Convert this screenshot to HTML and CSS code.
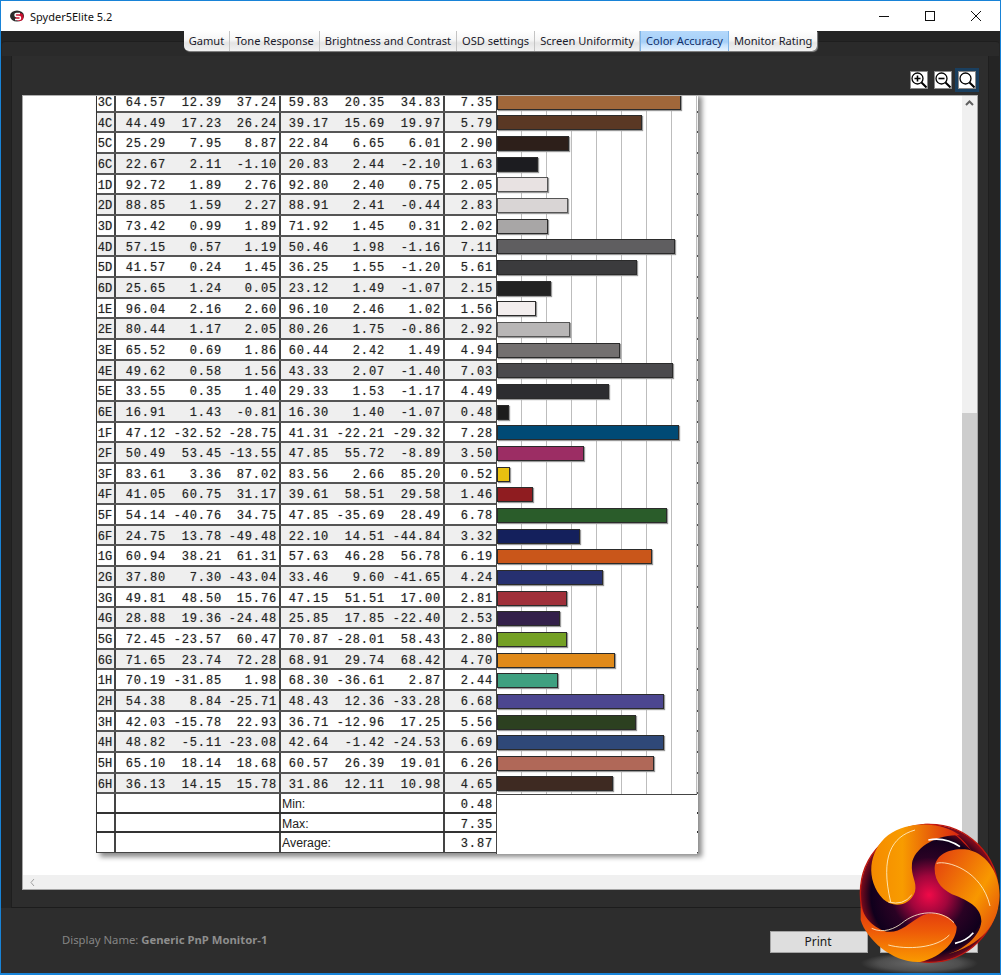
FILE: index.html
```html
<!DOCTYPE html>
<html lang="en">
<head>
<meta charset="utf-8">
<title>Spyder5Elite 5.2</title>
<link rel="stylesheet" href="styles.css">
</head>
<body>
<div class="window">
  <header class="titlebar">
    <svg class="appicon" width="16" height="16" viewBox="0 0 16 16"><ellipse cx="7" cy="8" rx="7" ry="5.500" fill="#2a2a2a"/><circle cx="9.500" cy="9" r="4" fill="#c8102e"/><path d="M10 5.500H6.500a1.500 1.500 0 0 0 0 3h2.500a1.500 1.500 0 0 1 0 3H5" fill="none" stroke="#fff" stroke-width="1.500"/></svg>
    <span class="apptitle">Spyder5Elite 5.2</span>
    <div class="winctl">
      <svg width="46" height="30" viewBox="0 0 46 30"><path d="M18 15.500h10" stroke="#111" fill="none"/></svg>
      <svg width="46" height="30" viewBox="0 0 46 30"><rect x="18.500" y="10.500" width="9" height="9" stroke="#111" fill="none"/></svg>
      <svg width="46" height="30" viewBox="0 0 46 30"><path d="M18 10l10 10M28 10l-10 10" stroke="#111" fill="none"/></svg>
    </div>
  </header>
  <nav class="tabstrip">
    <div class="tabs">
      <span class="tab">Gamut</span><span class="tab">Tone Response</span><span class="tab">Brightness and Contrast</span><span class="tab">OSD settings</span><span class="tab">Screen Uniformity</span><span class="tab active">Color Accuracy</span><span class="tab">Monitor Rating</span>
    </div>
  </nav>
  <main class="panel">
    <div class="tools">
      <span class="zoombtn"><svg width="16" height="16" viewBox="0 0 16 16"><circle cx="6.500" cy="6.500" r="5.500" fill="none" stroke="#000" stroke-width="1.300"/><path d="M10.500 10.500l5 5" stroke="#000" stroke-width="2"/><path d="M3.500 6.500h6M6.500 3.500v6" stroke="#000" stroke-width="1.600"/></svg></span>
      <span class="zoombtn"><svg width="16" height="16" viewBox="0 0 16 16"><circle cx="6.500" cy="6.500" r="5.500" fill="none" stroke="#000" stroke-width="1.300"/><path d="M10.500 10.500l5 5" stroke="#000" stroke-width="2"/><path d="M3.500 6.500h6" stroke="#000" stroke-width="1.600"/></svg></span>
      <span class="zoombtn selected"><svg width="16" height="16" viewBox="0 0 16 16"><circle cx="6.500" cy="6.500" r="5.500" fill="none" stroke="#000" stroke-width="1.300"/><path d="M10.500 10.500l5 5" stroke="#000" stroke-width="2"/></svg></span>
    </div>
    <section class="viewport">
      <div class="content">
        <div class="report">
          <div class="row"><span class="id">3C</span><span class="v a">64.57</span><span class="v">12.39</span><span class="v c">37.24</span><span class="v b">59.83</span><span class="v">20.35</span><span class="v">34.83</span><span class="v de">7.35</span><span class="chart"><i class="bar" style="width:184px;background:#a0673a"></i></span></div>
          <div class="row alt"><span class="id">4C</span><span class="v a">44.49</span><span class="v">17.23</span><span class="v c">26.24</span><span class="v b">39.17</span><span class="v">15.69</span><span class="v">19.97</span><span class="v de">5.79</span><span class="chart"><i class="bar" style="width:145px;background:#5a3824"></i></span></div>
          <div class="row"><span class="id">5C</span><span class="v a">25.29</span><span class="v">7.95</span><span class="v c">8.87</span><span class="v b">22.84</span><span class="v">6.65</span><span class="v">6.01</span><span class="v de">2.90</span><span class="chart"><i class="bar" style="width:72px;background:#2d1f1a"></i></span></div>
          <div class="row alt"><span class="id">6C</span><span class="v a">22.67</span><span class="v">2.11</span><span class="v c">-1.10</span><span class="v b">20.83</span><span class="v">2.44</span><span class="v">-2.10</span><span class="v de">1.63</span><span class="chart"><i class="bar" style="width:41px;background:#1c1c20"></i></span></div>
          <div class="row"><span class="id">1D</span><span class="v a">92.72</span><span class="v">1.89</span><span class="v c">2.76</span><span class="v b">92.80</span><span class="v">2.40</span><span class="v">0.75</span><span class="v de">2.05</span><span class="chart"><i class="bar light" style="width:51px;background:#e8e2e2"></i></span></div>
          <div class="row alt"><span class="id">2D</span><span class="v a">88.85</span><span class="v">1.59</span><span class="v c">2.27</span><span class="v b">88.91</span><span class="v">2.41</span><span class="v">-0.44</span><span class="v de">2.83</span><span class="chart"><i class="bar light" style="width:71px;background:#d9d5d5"></i></span></div>
          <div class="row"><span class="id">3D</span><span class="v a">73.42</span><span class="v">0.99</span><span class="v c">1.89</span><span class="v b">71.92</span><span class="v">1.45</span><span class="v">0.31</span><span class="v de">2.02</span><span class="chart"><i class="bar" style="width:51px;background:#a8a6a6"></i></span></div>
          <div class="row alt"><span class="id">4D</span><span class="v a">57.15</span><span class="v">0.57</span><span class="v c">1.19</span><span class="v b">50.46</span><span class="v">1.98</span><span class="v">-1.16</span><span class="v de">7.11</span><span class="chart"><i class="bar" style="width:178px;background:#5f5e60"></i></span></div>
          <div class="row"><span class="id">5D</span><span class="v a">41.57</span><span class="v">0.24</span><span class="v c">1.45</span><span class="v b">36.25</span><span class="v">1.55</span><span class="v">-1.20</span><span class="v de">5.61</span><span class="chart"><i class="bar" style="width:140px;background:#3b3b3d"></i></span></div>
          <div class="row alt"><span class="id">6D</span><span class="v a">25.65</span><span class="v">1.24</span><span class="v c">0.05</span><span class="v b">23.12</span><span class="v">1.49</span><span class="v">-1.07</span><span class="v de">2.15</span><span class="chart"><i class="bar" style="width:54px;background:#222"></i></span></div>
          <div class="row"><span class="id">1E</span><span class="v a">96.04</span><span class="v">2.16</span><span class="v c">2.60</span><span class="v b">96.10</span><span class="v">2.46</span><span class="v">1.02</span><span class="v de">1.56</span><span class="chart"><i class="bar" style="width:39px;background:#f3eeee"></i></span></div>
          <div class="row alt"><span class="id">2E</span><span class="v a">80.44</span><span class="v">1.17</span><span class="v c">2.05</span><span class="v b">80.26</span><span class="v">1.75</span><span class="v">-0.86</span><span class="v de">2.92</span><span class="chart"><i class="bar light" style="width:73px;background:#b8b6b6"></i></span></div>
          <div class="row"><span class="id">3E</span><span class="v a">65.52</span><span class="v">0.69</span><span class="v c">1.86</span><span class="v b">60.44</span><span class="v">2.42</span><span class="v">1.49</span><span class="v de">4.94</span><span class="chart"><i class="bar" style="width:123px;background:#737070"></i></span></div>
          <div class="row alt"><span class="id">4E</span><span class="v a">49.62</span><span class="v">0.58</span><span class="v c">1.56</span><span class="v b">43.33</span><span class="v">2.07</span><span class="v">-1.40</span><span class="v de">7.03</span><span class="chart"><i class="bar" style="width:176px;background:#4b4a4d"></i></span></div>
          <div class="row"><span class="id">5E</span><span class="v a">33.55</span><span class="v">0.35</span><span class="v c">1.40</span><span class="v b">29.33</span><span class="v">1.53</span><span class="v">-1.17</span><span class="v de">4.49</span><span class="chart"><i class="bar" style="width:112px;background:#2d2d30"></i></span></div>
          <div class="row alt"><span class="id">6E</span><span class="v a">16.91</span><span class="v">1.43</span><span class="v c">-0.81</span><span class="v b">16.30</span><span class="v">1.40</span><span class="v">-1.07</span><span class="v de">0.48</span><span class="chart"><i class="bar" style="width:12px;background:#1c1c1c"></i></span></div>
          <div class="row"><span class="id">1F</span><span class="v a">47.12</span><span class="v">-32.52</span><span class="v c">-28.75</span><span class="v b">41.31</span><span class="v">-22.21</span><span class="v">-29.32</span><span class="v de">7.28</span><span class="chart"><i class="bar" style="width:182px;background:#004a75"></i></span></div>
          <div class="row alt"><span class="id">2F</span><span class="v a">50.49</span><span class="v">53.45</span><span class="v c">-13.55</span><span class="v b">47.85</span><span class="v">55.72</span><span class="v">-8.89</span><span class="v de">3.50</span><span class="chart"><i class="bar" style="width:87px;background:#9c2d64"></i></span></div>
          <div class="row"><span class="id">3F</span><span class="v a">83.61</span><span class="v">3.36</span><span class="v c">87.02</span><span class="v b">83.56</span><span class="v">2.66</span><span class="v">85.20</span><span class="v de">0.52</span><span class="chart"><i class="bar" style="width:13px;background:#e8c010"></i></span></div>
          <div class="row alt"><span class="id">4F</span><span class="v a">41.05</span><span class="v">60.75</span><span class="v c">31.17</span><span class="v b">39.61</span><span class="v">58.51</span><span class="v">29.58</span><span class="v de">1.46</span><span class="chart"><i class="bar" style="width:36px;background:#8f1c20"></i></span></div>
          <div class="row"><span class="id">5F</span><span class="v a">54.14</span><span class="v">-40.76</span><span class="v c">34.75</span><span class="v b">47.85</span><span class="v">-35.69</span><span class="v">28.49</span><span class="v de">6.78</span><span class="chart"><i class="bar" style="width:170px;background:#2a5c2a"></i></span></div>
          <div class="row alt"><span class="id">6F</span><span class="v a">24.75</span><span class="v">13.78</span><span class="v c">-49.48</span><span class="v b">22.10</span><span class="v">14.51</span><span class="v">-44.84</span><span class="v de">3.32</span><span class="chart"><i class="bar" style="width:83px;background:#14205c"></i></span></div>
          <div class="row"><span class="id">1G</span><span class="v a">60.94</span><span class="v">38.21</span><span class="v c">61.31</span><span class="v b">57.63</span><span class="v">46.28</span><span class="v">56.78</span><span class="v de">6.19</span><span class="chart"><i class="bar" style="width:155px;background:#c9561a"></i></span></div>
          <div class="row alt"><span class="id">2G</span><span class="v a">37.80</span><span class="v">7.30</span><span class="v c">-43.04</span><span class="v b">33.46</span><span class="v">9.60</span><span class="v">-41.65</span><span class="v de">4.24</span><span class="chart"><i class="bar" style="width:106px;background:#263070"></i></span></div>
          <div class="row"><span class="id">3G</span><span class="v a">49.81</span><span class="v">48.50</span><span class="v c">15.76</span><span class="v b">47.15</span><span class="v">51.51</span><span class="v">17.00</span><span class="v de">2.81</span><span class="chart"><i class="bar" style="width:70px;background:#a0303a"></i></span></div>
          <div class="row alt"><span class="id">4G</span><span class="v a">28.88</span><span class="v">19.36</span><span class="v c">-24.48</span><span class="v b">25.85</span><span class="v">17.85</span><span class="v">-22.40</span><span class="v de">2.53</span><span class="chart"><i class="bar" style="width:63px;background:#33204a"></i></span></div>
          <div class="row"><span class="id">5G</span><span class="v a">72.45</span><span class="v">-23.57</span><span class="v c">60.47</span><span class="v b">70.87</span><span class="v">-28.01</span><span class="v">58.43</span><span class="v de">2.80</span><span class="chart"><i class="bar" style="width:70px;background:#74a024"></i></span></div>
          <div class="row alt"><span class="id">6G</span><span class="v a">71.65</span><span class="v">23.74</span><span class="v c">72.28</span><span class="v b">68.91</span><span class="v">29.74</span><span class="v">68.42</span><span class="v de">4.70</span><span class="chart"><i class="bar" style="width:118px;background:#e08a1a"></i></span></div>
          <div class="row"><span class="id">1H</span><span class="v a">70.19</span><span class="v">-31.85</span><span class="v c">1.98</span><span class="v b">68.30</span><span class="v">-36.61</span><span class="v">2.87</span><span class="v de">2.44</span><span class="chart"><i class="bar" style="width:61px;background:#3fa080"></i></span></div>
          <div class="row alt"><span class="id">2H</span><span class="v a">54.38</span><span class="v">8.84</span><span class="v c">-25.71</span><span class="v b">48.43</span><span class="v">12.36</span><span class="v">-33.28</span><span class="v de">6.68</span><span class="chart"><i class="bar" style="width:167px;background:#4c4690"></i></span></div>
          <div class="row"><span class="id">3H</span><span class="v a">42.03</span><span class="v">-15.78</span><span class="v c">22.93</span><span class="v b">36.71</span><span class="v">-12.96</span><span class="v">17.25</span><span class="v de">5.56</span><span class="chart"><i class="bar" style="width:139px;background:#2c4020"></i></span></div>
          <div class="row alt"><span class="id">4H</span><span class="v a">48.82</span><span class="v">-5.11</span><span class="v c">-23.08</span><span class="v b">42.64</span><span class="v">-1.42</span><span class="v">-24.53</span><span class="v de">6.69</span><span class="chart"><i class="bar" style="width:167px;background:#2f4878"></i></span></div>
          <div class="row"><span class="id">5H</span><span class="v a">65.10</span><span class="v">18.14</span><span class="v c">18.68</span><span class="v b">60.57</span><span class="v">26.39</span><span class="v">19.01</span><span class="v de">6.26</span><span class="chart"><i class="bar" style="width:157px;background:#b06858"></i></span></div>
          <div class="row alt"><span class="id">6H</span><span class="v a">36.13</span><span class="v">14.15</span><span class="v c">15.78</span><span class="v b">31.86</span><span class="v">12.11</span><span class="v">10.98</span><span class="v de">4.65</span><span class="chart"><i class="bar" style="width:116px;background:#3e2a22"></i></span></div>
          <div class="sum"><span class="id"></span><span class="blank"></span><span class="lbl">Min:</span><span class="v de">0.48</span><span class="sumchart"></span></div>
          <div class="sum"><span class="id"></span><span class="blank"></span><span class="lbl">Max:</span><span class="v de">7.35</span><span class="sumchart"></span></div>
          <div class="sum"><span class="id"></span><span class="blank"></span><span class="lbl">Average:</span><span class="v de">3.87</span><span class="sumchart"></span></div>
        </div>
      </div>
      <div class="vscroll"><svg class="arrow" width="15" height="15" viewBox="0 0 15 15"><path d="M4 9l3.500-3.500L11 9" fill="none" stroke="#606060" stroke-width="2"/></svg><div class="thumb"></div></div>
      <div class="hscroll"><svg width="15" height="15" viewBox="0 0 15 15"><path d="M9 4L6 7.500 9 11" fill="none" stroke="#a0a0a0"/></svg></div>
    </section>
  </main>
  <footer class="footer">
    <span class="display">Display Name: <b>Generic PnP Monitor-1</b></span>
    <span class="btn print">Print</span>
    <span class="btn"></span>
  </footer>
  <svg class="logo" width="241" height="195" viewBox="0 0 723 585">
    <defs>
      <radialGradient id="shadow"><stop offset="0" stop-color="#6a6a6a"/><stop offset=".7" stop-color="#4e4e4e"/><stop offset="1" stop-color="#2d2d2d"/></radialGradient>
      <radialGradient id="core" cx="507" cy="345" r="205" gradientUnits="userSpaceOnUse"><stop offset="0" stop-color="#f00a48"/><stop offset=".28" stop-color="#a0063c"/><stop offset=".55" stop-color="#2a0224"/><stop offset=".85" stop-color="#10001c"/><stop offset="1" stop-color="#7a0a1c"/></radialGradient>
      <linearGradient id="b1" x1="0" y1="0" x2="1" y2="0"><stop offset="0" stop-color="#f58a00"/><stop offset=".35" stop-color="#f89c00"/><stop offset=".7" stop-color="#e65a0a"/><stop offset="1" stop-color="#d92410"/></linearGradient>
      <linearGradient id="b2" x1="0" y1="0" x2="1" y2="1"><stop offset="0" stop-color="#e23a10"/><stop offset=".55" stop-color="#f89800"/><stop offset="1" stop-color="#d82c10"/></linearGradient>
      <linearGradient id="b3" x1="0" y1="0" x2="0" y2="1"><stop offset="0" stop-color="#dc2a12"/><stop offset=".5" stop-color="#ee5a08"/><stop offset="1" stop-color="#fa9a00"/></linearGradient>
    </defs>
    <ellipse cx="478" cy="550" rx="176" ry="32" fill="url(#shadow)"/>
    <circle cx="508" cy="340" r="207" fill="url(#core)" stroke="#c0180f" stroke-width="4"/>
    <path d="M635 212C590 150 540 130 490 131C540 135 590 160 612 190Z" fill="#d8200f"/>
    <path d="M600 166C550 128 450 118 385 165C325 212 315 300 370 358C400 385 450 378 465 335C472 305 452 290 456 250C462 205 530 160 600 166Z" fill="url(#b1)"/>
    <path d="M524 262C528 222 570 204 615 208C680 215 725 285 718 360C712 430 670 495 555 525C610 510 660 470 664 425C665 385 630 365 590 348C550 335 522 305 524 262Z" fill="url(#b2)"/>
    <path d="M302 360C302 400 330 440 380 455C420 460 445 430 480 410C520 390 570 400 590 440C590 480 550 530 480 546C400 550 320 480 302 420Z" fill="url(#b3)"/>
    <path d="M385 366Q430 378 455 345M465 150C395 170 360 230 392 366" fill="none" stroke="#fff3d0" stroke-width="2.500"/>
    <path d="M530 250C560 240 665 270 690 378M335 445C370 462 405 445 425 430C470 392 540 385 582 428M385 495C440 510 530 505 568 465" fill="none" stroke="#fff3d0" stroke-width="2.500"/>
    <path d="M505 180Q555 170 600 200" fill="none" stroke="#fff" stroke-width="5"/>
    <path d="M585 490Q620 482 640 458" fill="none" stroke="#fff" stroke-width="5"/>
  </svg>
</div>
</body>
</html>
```
FILE: styles.css
```css
* { box-sizing: border-box; }
html, body { margin: 0; padding: 0; background: #2d2d2d; }
.window {
  position: relative;
  width: 1001px;
  height: 975px;
  overflow: hidden;
  display: flex;
  flex-direction: column;
  background: #242424;
  border: 1px solid #1883d7;
  border-bottom-width: 2px;
  font-family: "Noto Sans", sans-serif;
}
.titlebar {
  height: 30px;
  flex: none;
  background: #fff;
  display: flex;
  align-items: center;
  padding-left: 9px;
  font-size: 11px;
  color: #111;
}
.appicon { margin-right: 4px; }
.winctl { margin-left: auto; display: flex; margin-right: 1px; }
.tabstrip {
  position: relative;
  height: 24px;
  flex: none;
  display: flex;
  justify-content: center;
  align-items: flex-start;
}
.tabstrip::before {
  content: "";
  position: absolute;
  left: 1px;
  right: 1px;
  top: 10px;
  height: 14px;
  background: #2a2a2a;
  border-radius: 3px 3px 0 0;
  border-top: 1px solid #1e1e1e;
}
.tabs {
  position: relative;
  display: flex;
  height: 20px;
  border-radius: 0 0 5px 5px;
  overflow: hidden;
  box-shadow: 1px 1px 1px #888;
}
.tab {
  display: block;
  font-size: 11.1px;
  line-height: 20px;
  padding: 0 5px;
  color: #1a1a2a;
  background: linear-gradient(#fff, #f6f6f6 45%, #e4e4e4 60%, #f2f2f2);
  border-right: 1px solid #c4c4c4;
  white-space: nowrap;
}
.tab:last-child { border-right: 0; }
.tab.active {
  color: #12306a;
  background: linear-gradient(#b4d8fb, #a6d0f8 55%, #c5e1fc 70%, #e6f3ff);
  border-left: 1px solid #7fb5e8;
  border-right: 1px solid #7fb5e8;
}
.panel {
  flex: none;
  height: 853px;
  margin: 0 11px 0 10px;
  background: #2d2d2d;
  border: 1px solid #1e1e1e;
  border-bottom: 1px solid #1c1c1c;
  padding: 0 10px 17px 10px;
  display: flex;
  flex-direction: column;
}
.tools {
  height: 39px;
  flex: none;
  display: flex;
  justify-content: flex-end;
  align-items: flex-start;
  padding-top: 15px;
  padding-right: 2px;
  gap: 6px;
}
.zoombtn {
  width: 18px;
  height: 18px;
  background: #fff;
  border: 1px solid #8a8a8a;
  display: flex;
  align-items: center;
  justify-content: center;
}
.zoombtn.selected { outline: 3px solid #1a3f5f; }
.viewport {
  flex: 1;
  min-height: 0;
  background: #fff;
  border: 1px solid #a6a6a6;
  border-top-color: #b0b0b0;
  display: grid;
  grid-template-columns: 1fr 15px;
  grid-template-rows: 1fr 14px;
}
.content { overflow: hidden; min-width: 0; min-height: 0; padding-left: 73px; }
.report {
  width: 602px;
  margin-top: -4px;
  background: #fff;
  box-shadow: 4px 4px 5px #8c8c8c;
  border-left: 1px solid #333;
  border-bottom: 1px solid #444;
  font-family: "Liberation Mono", monospace;
  font-size: 12px;
  color: #222;
  text-shadow: 0 0 1px #999;
}
.row {
  display: flex;
  height: 20.66px;
  align-items: stretch;
  border-bottom: 2px solid #555;
  background: #fff;
}
.row.alt { background: #efefef; }
.id, .v { line-height: 23px; letter-spacing: .85px; }
.id {
  width: 19px;
  text-align: center;
  padding-right: 1px;
  letter-spacing: 0;
  border-right: 2px solid #444;
  flex: none;
}
.v { flex: none; width: 56px; text-align: right; padding-right: 2px; white-space: nowrap; }
.v.a { width: 52px; }
.v.c { width: 55px; }
.v.b { width: 52px; border-left: 2px solid #444; }
.v.de { width: 53px; border-left: 2px solid #444; padding-right: 3px; }
.chart {
  flex: none;
  width: 201px;
  margin-bottom: -2px;
  border-left: 1px solid #444;
  display: flex;
  align-items: center;
  background-color: #fff;
  background-image: linear-gradient(to right, transparent 24px, #bdbdbd 24px, #bdbdbd 25px);
  background-size: 25px 100%;
}
.bar {
  display: block;
  height: 15px;
  border: 1px solid #2b2b2b;
  box-shadow: 1px 1px 1px #999;
}
.bar.light { border-color: #555; }
.sum {
  display: flex;
  height: 19.33px;
  border-bottom: 2px solid #333;
  background: #fff;
}
.sum:last-child { border-bottom: 0; }
.sum .blank { width: 165px; flex: none; border-right: 2px solid #444; }
.lbl {
  width: 162px;
  flex: none;
  font-family: "Liberation Sans", sans-serif;
  font-size: 12.3px;
  line-height: 21px;
  padding-left: 1px;
  text-shadow: none;
}
.sum .v.de { line-height: 23px; }
.sumchart { flex: none; width: 201px; margin-bottom: -2px; background: #fff; border-left: 1px solid #444; }
.row + .sum .sumchart { border-top: 1px solid #444; }
.vscroll {
  grid-row: 1 / 3;
  grid-column: 2;
  background: #f0f0f0;
  position: relative;
}
.arrow { display: block; }
.thumb {
  position: absolute;
  left: 0;
  right: 0;
  top: 317px;
  bottom: 0;
  background: #cdcdcd;
}
.hscroll {
  background: #f0f0f0;
  padding-left: 2px;
  display: flex;
  align-items: center;
}
.footer {
  flex: 1;
  display: flex;
  align-items: flex-start;
  background: #2d2d2d;
  padding: 23px 22px 0 61px;
  gap: 12px;
}
.display {
  font-size: 11.3px;
  line-height: 18px;
  color: #858585;
  margin-right: auto;
}
.display b { font-weight: 700; color: #8e8e8e; }
.btn {
  width: 98px;
  height: 22px;
  background: #dedede;
  border: 1px solid #a4a4a4;
  font-size: 12px;
  line-height: 20px;
  text-align: center;
  color: #1a1a1a;
}
.btn.print { padding-right: 2px; }
.logo { position: absolute; right: -1px; bottom: -2px; }
```
